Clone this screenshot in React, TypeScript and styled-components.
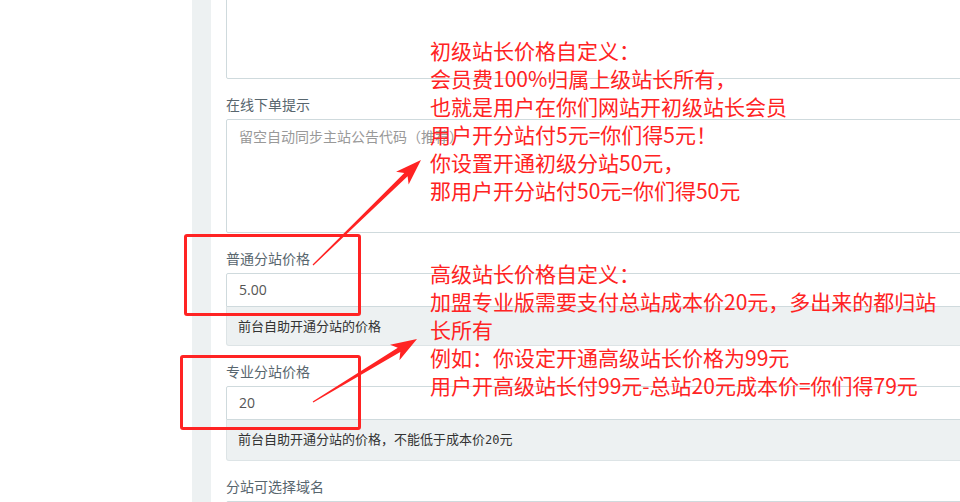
import React from 'react';
import styled, { createGlobalStyle } from 'styled-components';

const GlobalStyle = createGlobalStyle`
  html, body {
    margin: 0;
    padding: 0;
    background: #fff;
    overflow: hidden;
  }
  body {
    font-family: "Noto Sans CJK SC", "Noto Sans", "Liberation Sans", sans-serif;
  }
`;

const Page = styled.div`
  display: flex;
  width: 960px;
  height: 502px;
  overflow: hidden;
  position: relative;
`;

const Sidebar = styled.div`
  width: 192px;
  flex-shrink: 0;
  background: #fff;
`;

const Main = styled.div`
  flex: 1;
  background: #edf1f2;
  padding-left: 19px;
  min-width: 0;
`;

const Panel = styled.div`
  background: #fff;
  margin-top: -41px;
  padding: 0 0 0 15px;
  width: 900px;
`;

const FormGroup = styled.div`
  margin-bottom: 15px;
`;

const Label = styled.label`
  display: block;
  font-size: 14px;
  line-height: 20px;
  color: #58666e;
  margin-bottom: 5px;
`;

const TextArea = styled.div<{ $h: number }>`
  height: ${p => p.$h}px;
  box-sizing: border-box;
  border: 1px solid #cfdadd;
  border-radius: 2px;
  padding: 6px 12px;
  font-size: 14px;
  line-height: 20px;
  color: #999;
`;

const Input = styled.div<{ $attached?: boolean }>`
  height: 34px;
  box-sizing: border-box;
  border: 1px solid #cfdadd;
  border-radius: ${p => (p.$attached ? '2px 2px 0 0' : '2px')};
  padding: 6px 12px;
  font-size: 14px;
  line-height: 20px;
  color: #555;
  font-family: "Open Sans", "Noto Sans", sans-serif;
`;

const Help = styled.div`
  background: #edf1f2;
  border: 1px solid #dde4e6;
  border-top: none;
  border-radius: 0 0 3px 3px;
  padding: 9px 11px 10px;
  font-size: 13px;
  line-height: 19px;
  color: #333;
`;

const Mono = styled.span`
  font-family: "DejaVu Sans Mono", "Liberation Mono", monospace;
  font-size: 12px;
`;

const Note = styled.div<{ $top: number }>`
  position: absolute;
  left: 430px;
  top: ${p => p.$top}px;
  width: 530px;
  font-size: 21px;
  line-height: 28px;
  color: #ff2323;
  font-family: "Noto Sans CJK SC", sans-serif;
  white-space: pre;
`;

const Frame = styled.div<{ $x: number; $y: number; $w: number; $h: number }>`
  position: absolute;
  left: ${p => p.$x}px;
  top: ${p => p.$y}px;
  width: ${p => p.$w}px;
  height: ${p => p.$h}px;
  box-sizing: border-box;
  border: 3px solid #ff2323;
  border-radius: 3px;
`;

const Overlay = styled.svg`
  position: absolute;
  left: 0;
  top: 0;
  pointer-events: none;
`;

const Arrow: React.FC<{ x1: number; y1: number; x2: number; y2: number }> = ({ x1, y1, x2, y2 }) => {
  const dx = x2 - x1;
  const dy = y2 - y1;
  const len = Math.hypot(dx, dy);
  const ux = dx / len;
  const uy = dy / len;
  const px = -uy;
  const py = ux;
  const headLen = 26;
  const bx = x2 - ux * headLen;
  const by = y2 - uy * headLen;
  const neck = 2.4;
  const wing = 9;
  const pts = [
    [x1 - px * 0.6, y1 - py * 0.6],
    [bx + ux * 5 - px * neck, by + uy * 5 - py * neck],
    [bx - px * wing, by - py * wing],
    [x2, y2],
    [bx + px * wing, by + py * wing],
    [bx + ux * 5 + px * neck, by + uy * 5 + py * neck],
    [x1 + px * 0.6, y1 + py * 0.6],
  ]
    .map(p => p.join(','))
    .join(' ');
  return <polygon points={pts} fill="#ff2323" />;
};

export default function App() {
  return (
    <>
      <GlobalStyle />
      <Page>
        <Sidebar />
        <Main>
          <Panel>
            <FormGroup>
              <TextArea $h={120} />
            </FormGroup>
            <FormGroup>
              <Label>在线下单提示</Label>
              <TextArea $h={114}>留空自动同步主站公告代码（推荐）</TextArea>
            </FormGroup>
            <FormGroup>
              <Label>普通分站价格</Label>
              <Input $attached>5.00</Input>
              <Help>前台自助开通分站的价格</Help>
            </FormGroup>
            <FormGroup>
              <Label>专业分站价格</Label>
              <Input $attached>20</Input>
              <Help>
                前台自助开通分站的价格，不能低于成本价<Mono>20</Mono>元
              </Help>
            </FormGroup>
            <FormGroup>
              <Label>分站可选择域名</Label>
              <Input />
            </FormGroup>
          </Panel>
        </Main>

        <Note $top={36}>
          {'初级站长价格自定义：\n会员费100%归属上级站长所有，\n也就是用户在你们网站开初级站长会员\n用户开分站付5元=你们得5元！\n你设置开通初级分站50元，\n那用户开分站付50元=你们得50元'}
        </Note>
        <Note $top={259}>
          {'高级站长价格自定义：\n加盟专业版需要支付总站成本价20元，多出来的都归站\n长所有\n例如：你设定开通高级站长价格为99元\n用户开高级站长付99元-总站20元成本价=你们得79元'}
        </Note>

        <Frame $x={184} $y={234} $w={177} $h={82} />
        <Frame $x={180} $y={355} $w={181} $h={75} />

        <Overlay width={960} height={502}>
          <Arrow x1={313} y1={265} x2={421} y2={160} />
          <Arrow x1={313} y1={402} x2={417} y2={339} />
        </Overlay>
      </Page>
    </>
  );
}
